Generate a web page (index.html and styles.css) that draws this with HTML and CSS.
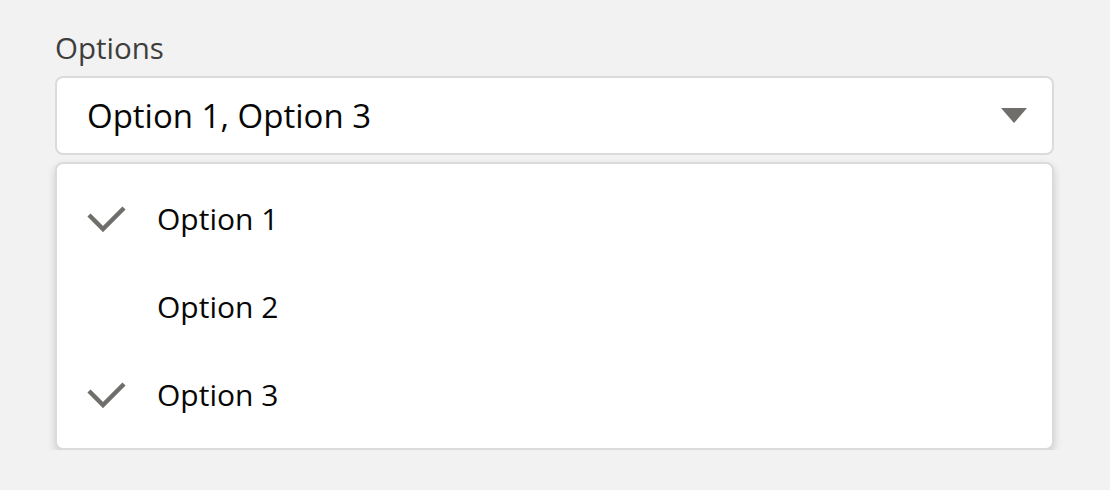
FILE: index.html
```html
<!DOCTYPE html>
<html lang="en">
<head>
    <meta charset="UTF-8">
    <title>Combobox</title>
    <link rel="stylesheet" href="styles.css">
</head>
<body>
    <div class="form-element">
        <label class="form-label">Options</label>
        <div class="combobox">
            <span class="combobox-value">Option 1, Option 3</span>
            <span class="combobox-arrow"></span>
        </div>
        <ul class="listbox">
            <li class="listbox-item">
                <svg class="check" viewBox="0 0 40 28" width="40" height="28">
                    <path d="M2 11 L16 25 L37 4" fill="none" stroke="#706e6b" stroke-width="4.5"/>
                </svg>
                <span>Option 1</span>
            </li>
            <li class="listbox-item">
                <span class="check"></span>
                <span>Option 2</span>
            </li>
            <li class="listbox-item">
                <svg class="check" viewBox="0 0 40 28" width="40" height="28">
                    <path d="M2 11 L16 25 L37 4" fill="none" stroke="#706e6b" stroke-width="4.5"/>
                </svg>
                <span>Option 3</span>
            </li>
        </ul>
    </div>
</body>
</html>
```

FILE: styles.css
```css
* {
    box-sizing: border-box;
    margin: 0;
    padding: 0;
}

body {
    background-color: #f2f2f2;
    font-family: 'Open Sans', sans-serif;
    color: #080707;
}

.form-element {
    width: 999px;
    margin: 30px 0 0 55px;
}

.form-label {
    display: block;
    font-size: 29.5px;
    line-height: 35px;
    color: #3e3e3c;
    margin-bottom: 11px;
}

.combobox {
    display: flex;
    align-items: center;
    justify-content: space-between;
    height: 79px;
    padding: 0 25px 0 30px;
    background: #ffffff;
    border: 2px solid #dddbda;
    border-radius: 8px;
}

.combobox-value {
    font-size: 33px;
}

.combobox-arrow {
    width: 0;
    height: 0;
    border-left: 13px solid transparent;
    border-right: 13px solid transparent;
    border-top: 15px solid #706e6b;
}

.listbox {
    list-style: none;
    margin-top: 7px;
    padding: 10px 0;
    background: #ffffff;
    border: 2px solid #dddbda;
    border-radius: 8px;
    box-shadow: 0 4px 8px rgba(0, 0, 0, 0.16);
}

.listbox-item {
    display: flex;
    align-items: center;
    height: 88px;
    padding-left: 30px;
    font-size: 30px;
}

.check {
    display: block;
    width: 40px;
    height: 28px;
    margin-right: 30px;
}
```
